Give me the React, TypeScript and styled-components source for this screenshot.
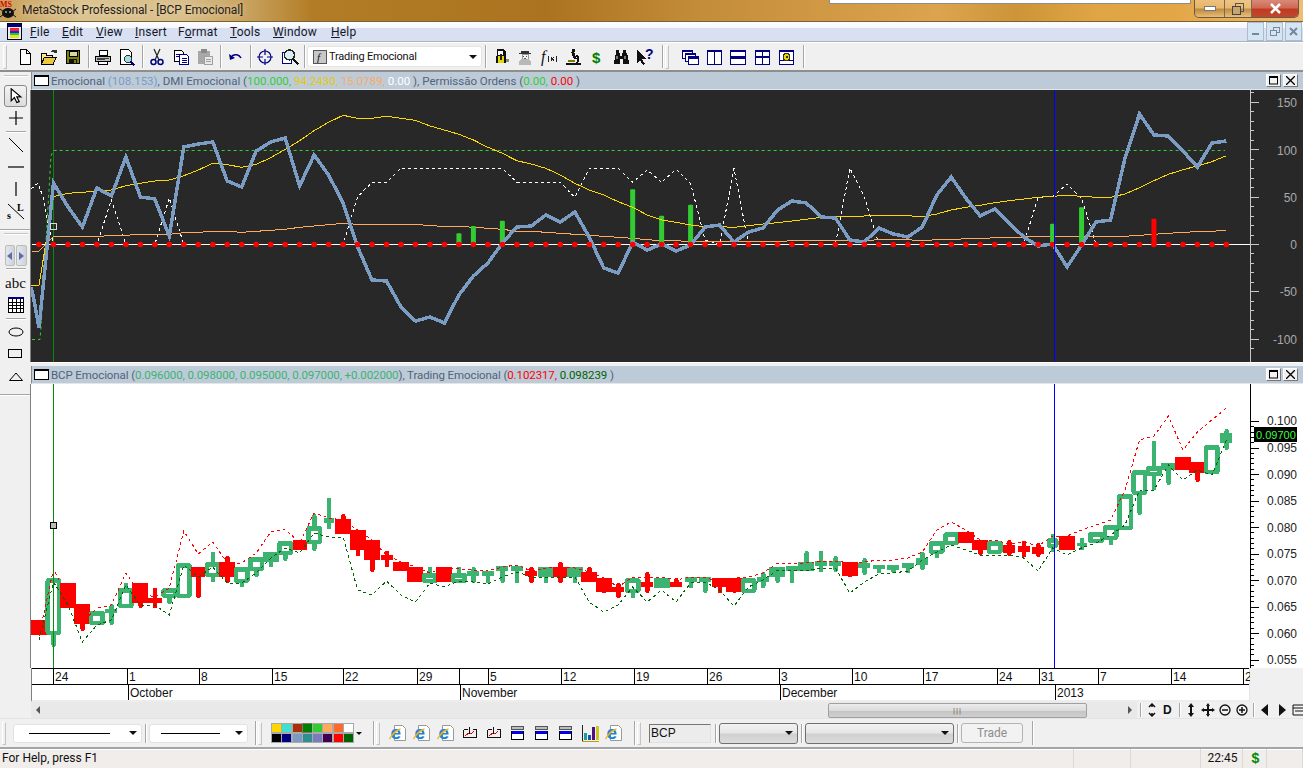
import React from 'react';
import styled, {createGlobalStyle} from 'styled-components';

const GlobalStyle = createGlobalStyle`
  html, body {
    margin: 0;
    padding: 0;
    background: #f0f0f0;
    overflow: hidden;
  }
`

const UI_FONT = `Roboto, "Noto Sans", sans-serif`
const ARIAL = `"Liberation Sans", Arial, sans-serif`

const Window = styled.div`
  width: 1303px;
  height: 768px;
  display: flex;
  flex-direction: column;
  overflow: hidden;
  position: relative;
  font-family: ${UI_FONT};
  font-size: 12px;
  color: #111;
  background: #f0f0f0;
`

/* ---------- title bar ---------- */

const TitleBar = styled.div`
  height: 22px;
  flex: none;
  box-sizing: border-box;
  display: flex;
  align-items: flex-start;
  border-bottom: 1px solid #7a6236;
  background: linear-gradient(90deg, #c79f58 0, #dcc490 6%, #d9bf8a 14%, #c8a25d 19%, #b27c26 24%, #ab731f 42%, #c48d3a 54%,
    #d49c47 66%, #dca44e 72%, #cd9538 78%, #dfa444 84%, #e2a646 90%, #ecbd75 100%);
`
const TitleLogo = styled.svg`
  width: 17px;
  height: 20px;
  flex: none;
`
const TitleText = styled.div`
  margin-left: 5px;
  font-size: 12px;
  letter-spacing: -0.1px;
  line-height: 21px;
  color: #2a2118;
  white-space: nowrap;
  text-shadow: 0 0 6px rgba(255, 255, 255, 0.55);
`
const PeekingMenu = styled.div`
  position: absolute;
  left: 829px;
  top: 0;
  width: 360px;
  height: 3px;
  background: #fff;
  border: 1px solid #8c8c8c;
  border-top: none;
`
const CaptionButtons = styled.div`
  margin-left: auto;
  margin-right: 4px;
  display: flex;
  height: 17px;
  border: 1px solid #6d5a3c;
  border-top: none;
  border-radius: 0 0 5px 5px;
  overflow: hidden;
`
const CaptionButton = styled.div<{ $w: number; $close?: boolean }>`
  width: ${p => p.$w}px;
  display: flex;
  align-items: center;
  justify-content: center;
  border-right: 1px solid #80694a;
  background: ${p => p.$close
    ? 'linear-gradient(#d98a78 0, #cf6a58 45%, #c23a1e 55%, #bc4a30 100%)'
    : 'linear-gradient(rgba(255,255,255,0.25) 0, rgba(255,255,255,0.12) 45%, rgba(110,80,40,0.35) 55%, rgba(240,210,160,0.4) 100%)'};
  &:last-child { border-right: none; }
`

/* ---------- menu bar ---------- */

const MenuBar = styled.div`
  height: 20px;
  flex: none;
  box-sizing: border-box;
  display: flex;
  align-items: center;
  padding-left: 7px;
  background: linear-gradient(#fdfdff 0, #f6f8fd 30%, #d9e0f1 34%, #d9e0f1 100%);
  border-bottom: 1px solid #a8b3c4;
`
const DocIcon = styled.svg`
  width: 15px;
  height: 17px;
  margin-right: 8px;
  flex: none;
`
const MenuItem = styled.span<{ $w: number }>`
  width: ${p => p.$w}px;
  font-size: 12px;
  letter-spacing: 0.2px;
  color: #14182a;
  u { text-underline-offset: 1px; }
`
const MdiButtons = styled.div`
  margin-left: auto;
  display: flex;
  gap: 2px;
  margin-right: 1px;
  height: 19px;
`
const MdiButton = styled.div`
  width: 17px;
  box-sizing: border-box;
  display: flex;
  align-items: center;
  justify-content: center;
  background: #d6e5f4;
  border: 1px solid #aabccd;
`

/* ---------- toolbars ---------- */

const TopToolbar = styled.div`
  height: 30px;
  flex: none;
  box-sizing: border-box;
  display: flex;
  align-items: center;
  padding-left: 3px;
  border-top: 1px solid #fff;
  border-bottom: 2px solid #8e8e8e;
  background: #f0f0f0;
`
const Grip = styled.div<{ $mr?: number; $h?: number }>`
  width: 2px;
  height: ${p => p.$h ?? 22}px;
  flex: none;
  margin-right: ${p => p.$mr ?? 0}px;
  border: 1px solid #c4c4c4;
  border-left-color: #fff;
  border-top-color: #fff;
`
const Sep = styled.div<{ $ml?: number; $mr?: number; $h?: number }>`
  width: 1px;
  height: ${p => p.$h ?? 23}px;
  flex: none;
  margin-left: ${p => p.$ml ?? 3}px;
  margin-right: ${p => p.$mr ?? 2}px;
  background: #a6a6a6;
  box-shadow: 1px 0 0 #fff;
`
const ToolSlot = styled.div`
  width: 24px;
  height: 22px;
  flex: none;
  display: flex;
  align-items: center;
  justify-content: center;
`
const Combo = styled.div`
  width: 175px;
  height: 21px;
  flex: none;
  box-sizing: border-box;
  display: flex;
  align-items: center;
  padding: 0 4px 0 5px;
  background: #fff;
  border-radius: 3px;
  border: 1px solid #e4e4e4;
`
const ComboText = styled.span`
  margin-left: 2px;
  font-size: 11px;
  letter-spacing: -0.2px;
  color: #111;
  white-space: nowrap;
`
const ArrowDown = styled.span<{ $small?: boolean }>`
  margin-left: ${p => p.$small ? '3px' : 'auto'};
  width: 0;
  height: 0;
  flex: none;
  border-left: ${p => p.$small ? 3 : 4}px solid transparent;
  border-right: ${p => p.$small ? 3 : 4}px solid transparent;
  border-top: ${p => p.$small ? 3 : 4}px solid #111;
`

/* ---------- workspace ---------- */

const Workspace = styled.div`
  height: 646px;
  flex: none;
  display: flex;
`
const LeftToolbar = styled.div`
  width: 31px;
  flex: none;
  display: flex;
  flex-direction: column;
  align-items: center;
  background: #f0f0f0;
`
const LeftGrip = styled.div<{ $mt: number; $mb: number }>`
  width: 24px;
  height: 1px;
  flex: none;
  margin-top: ${p => p.$mt}px;
  margin-bottom: ${p => p.$mb}px;
  background: #c4c4c4;
  border-bottom: 1px solid #fff;
`
const LeftRule = styled.div<{ $mt: number; $mb: number; $full?: boolean }>`
  width: ${p => p.$full ? 31 : 20}px;
  height: 1px;
  flex: none;
  margin-top: ${p => p.$mt}px;
  margin-bottom: ${p => p.$mb}px;
  background: #a6a6a6;
  box-shadow: 0 1px 0 #fff;
`
const LeftSlot = styled.div<{ $active?: boolean }>`
  width: 23px;
  height: 22px;
  flex: none;
  display: flex;
  align-items: center;
  justify-content: center;
  box-sizing: border-box;
  ${p => p.$active ? `
    border: 1px solid #8a8a8a;
    border-radius: 3px;
    background: linear-gradient(#f4f4f4, #dcdcdc);
  ` : ''}
`
const SpinBox = styled.div`
  width: 22px;
  height: 21px;
  flex: none;
  display: flex;
  gap: 1px;
`
const SpinHalf = styled.div`
  flex: 1;
  display: flex;
  align-items: center;
  justify-content: center;
  background: linear-gradient(90deg, #e4e6ea, #cfd3da);
  border: 1px solid #bcbcbc;
  box-sizing: border-box;
  border-radius: 2px;
`
const AbcLabel = styled.span`
  font-family: "Liberation Serif", serif;
  font-size: 15px;
  color: #111;
`
const Panes = styled.div`
  flex: 1;
  min-width: 0;
  display: flex;
  flex-direction: column;
`
const PaneHeader = styled.div`
  height: 18px;
  flex: none;
  box-sizing: border-box;
  display: flex;
  align-items: center;
  padding: 0 5px 0 2px;
  background: #bdcbd8;
  border-bottom: 1px solid #e6e6e6;
  border-left: 1px solid #8a8a8a;
`
const PaneIcon = styled.div`
  width: 15px;
  height: 11px;
  flex: none;
  box-sizing: border-box;
  margin-right: 2px;
  background: #fff;
  border: 1px solid #000;
  border-top-width: 2px;
`
const Legend = styled.div<{ $ls?: number }>`
  font-size: 11.5px;
  letter-spacing: ${p => p.$ls ?? 0}px;
  color: #52627a;
  white-space: nowrap;
`
const V = styled.span<{ $c: string }>`
  color: ${p => p.$c};
`
const PaneButtons = styled.div`
  margin-left: auto;
  display: flex;
  gap: 2px;
`
const PaneButton = styled.div`
  width: 15px;
  height: 13px;
  box-sizing: border-box;
  display: flex;
  align-items: center;
  justify-content: center;
  background: #f2f2f2;
  border: 1px solid #fff;
  border-right-color: #777;
  border-bottom-color: #777;
`
const ChartDark = styled.svg`
  width: 1272px;
  height: 272px;
  flex: none;
  display: block;
  background: #282828;
  border-left: 1px solid #7f7f7f;
  margin-left: -1px;
  font-family: ${ARIAL};
`
const PaneGap = styled.div`
  height: 4px;
  flex: none;
  box-sizing: border-box;
  background: #f0f0f0;
  border-top: 1px solid #fff;
`
const ChartLight = styled.svg`
  width: 1272px;
  height: 284px;
  flex: none;
  display: block;
  background: #fff;
  border-left: 1px solid #7f7f7f;
  margin-left: -1px;
  font-family: ${ARIAL};
`
const DateAxis = styled.div`
  width: 1219px;
  height: 34px;
  flex: none;
  box-sizing: border-box;
  background: #fff;
  border-left: 1px solid #7f7f7f;
  border-right: 1px solid #e4e4e4;
  border-bottom: 2px solid #ededed;
  font-family: ${ARIAL};
  font-size: 12px;
  color: #111;
`
const DateRow = styled.div`
  display: flex;
  height: 16px;
  box-sizing: border-box;
  border-top: 1px solid #000;
`
const DateCell = styled.div<{ $w: number; $first?: boolean }>`
  width: ${p => p.$w}px;
  flex: none;
  box-sizing: border-box;
  padding-left: 1px;
  line-height: 16px;
  white-space: nowrap;
  overflow: hidden;
  border-left: ${p => p.$first ? 'none' : '1px solid #000'};
`
const ScrollRow = styled.div`
  height: 16px;
  flex: none;
  display: flex;
  align-items: center;
  background: #f0f0f0;
`
const ScrollTrack = styled.div`
  width: 1106px;
  height: 16px;
  flex: none;
  display: flex;
  align-items: center;
  background: #e9e9e9;
`
const ScrollThumb = styled.div`
  width: 259px;
  height: 15px;
  margin-left: 788px;
  flex: none;
  box-sizing: border-box;
  display: flex;
  align-items: center;
  justify-content: center;
  border: 1px solid #a0a0a0;
  border-radius: 2px;
  background: linear-gradient(#ececec, #dcdcdc 50%, #c4c4c4 52%, #cfcfcf);
  font-size: 8px;
  letter-spacing: 1px;
  color: #555;
`
const ScrollArrow = styled.span<{ $dir: 'left' | 'right'; $ml: number }>`
  width: 0;
  height: 0;
  flex: none;
  margin-left: ${p => p.$ml}px;
  border-top: 4px solid transparent;
  border-bottom: 4px solid transparent;
  ${p => p.$dir === 'left' ? 'border-right: 4px solid #555;' : 'border-left: 4px solid #555;'}
`
const MiniSlot = styled.div<{ $w?: number }>`
  width: ${p => p.$w ?? 17}px;
  height: 16px;
  flex: none;
  display: flex;
  align-items: center;
  justify-content: flex-start;
  padding-left: 1px;
  box-sizing: border-box;
`
const MiniLetter = styled.span`
  font-family: ${ARIAL};
  font-weight: bold;
  font-size: 12px;
  margin-left: 3px;
  color: #111;
`

/* ---------- bottom ---------- */

const BottomToolbar = styled.div`
  height: 29px;
  flex: none;
  box-sizing: border-box;
  display: flex;
  align-items: center;
  padding-left: 2px;
  background: #f0f0f0;
  border-top: 1px solid #e4e4e4;
`
const LineSelect = styled.div<{ $w: number; $ml: number; $pl: number; $line: number }>`
  width: ${p => p.$w}px;
  height: 19px;
  margin-left: ${p => p.$ml}px;
  flex: none;
  box-sizing: border-box;
  display: flex;
  align-items: center;
  padding: 0 4px 0 ${p => p.$pl}px;
  background: #fff;
  border: 1px solid #e2e2e2;
  border-radius: 3px;
  &::before {
    content: '';
    width: ${p => p.$line}px;
    height: 1px;
    background: #000;
  }
`
const Palette = styled.div`
  display: grid;
  grid-template-columns: repeat(8, 9px);
  grid-auto-rows: 8px;
  column-gap: 1.3px;
  row-gap: 2px;
  margin-left: 10px;
  flex: none;
`
const Swatch = styled.div<{ $c: string; $on?: boolean }>`
  background: ${p => p.$c};
  outline: 1px solid ${p => p.$on ? '#777' : '#a9a9a9'};
`
const GreyInput = styled.div`
  width: 62px;
  height: 19px;
  margin-left: 8px;
  flex: none;
  box-sizing: border-box;
  padding-left: 1px;
  line-height: 17px;
  font-family: ${ARIAL};
  font-size: 12px;
  color: #111;
  background: #ececec;
  border: 1px solid #e0e0e0;
  border-top-color: #777;
  border-left-color: #777;
`
const GreySelect = styled.div<{ $w: number }>`
  width: ${p => p.$w}px;
  height: 21px;
  flex: none;
  box-sizing: border-box;
  display: flex;
  align-items: center;
  padding-right: 4px;
  border: 1px solid #707070;
  border-radius: 3px;
  background: linear-gradient(#f2f2f2, #e6e6e6 48%, #d0d0d0 52%, #dcdcdc);
`
const TradeButton = styled.div`
  width: 62px;
  height: 20px;
  flex: none;
  box-sizing: border-box;
  text-align: center;
  line-height: 18px;
  font-size: 12px;
  color: #8d8d8d;
  border: 1px solid #b4b4b4;
  border-radius: 3px;
  background: #f2f2f2;
`
const StatusBar = styled.div`
  height: 21px;
  flex: none;
  box-sizing: border-box;
  display: flex;
  align-items: center;
  background: #f0edeb;
  border-top: 2px solid #a5a5a5;
  box-shadow: inset 0 1px 0 #fff;
`
const StatusCell = styled.div<{ $w: number; $center?: boolean }>`
  width: ${p => p.$w}px;
  height: 100%;
  flex: none;
  box-sizing: border-box;
  line-height: 18px;
  padding-left: 2px;
  font-size: 12px;
  color: #111;
  text-align: ${p => p.$center ? 'center' : 'left'};
  border-right: 1px solid #dcd9d7;
  white-space: nowrap;
`
const Dollar = styled.span`
  color: #008a00;
  font-weight: bold;
  font-family: ${ARIAL};
  font-size: 14px;
`

/* ---------- icons ---------- */

const Ico = styled.svg.attrs({viewBox: '0 0 20 20'})`
  width: 20px;
  height: 20px;
  display: block;
  shape-rendering: crispEdges;
`
const SoftIco = styled(Ico)`
  shape-rendering: auto;
`
const NAVY = '#000080'

const IconNew = () => <Ico><path d="M5.5 2.5h6l3.5 3.5v11.5h-9.500z M11.500 2.500v3.500h3.500" fill="#fff" stroke="#000"/></Ico>
const IconOpen = () => (
  <Ico>
    <path d="M2.500 6.500h5v1.500h6v2h-8l-3 7z" fill="#ffe680" stroke="#000"/>
    <path d="M2.500 17.500l3-7.500h12l-3.500 7.500z" fill="#e8c840" stroke="#000"/>
    <path d="M12 5c1-2 3-3 5-2l1-1v4h-4l1-1c-1-.5-2 0-3 0z" fill="#333"/>
  </Ico>
)
const IconSave = () => (
  <Ico>
    <rect x="3.500" y="3.500" width="13" height="13" fill="#808000" stroke="#000"/>
    <rect x="6" y="4" width="8" height="5" fill="#d8d8a0" stroke="#000"/>
    <rect x="6" y="12" width="8" height="4.500" fill="#111"/>
    <rect x="11" y="13" width="2" height="3" fill="#808000"/>
  </Ico>
)
const IconPrint = () => (
  <Ico>
    <path d="M6.500 3.500h8v5h-8z" fill="#fff" stroke="#000"/>
    <path d="M2.500 9.500h15v5h-15z" fill="#c0c0c0" stroke="#000"/>
    <path d="M5.500 14.500h9v3h-9z" fill="#fff" stroke="#000"/>
    <path d="M4 11.500h12M4 12.500h8" stroke="#444"/>
    <rect x="14" y="10" width="2" height="1" fill="#e0c000"/>
  </Ico>
)
const IconPreview = () => (
  <Ico>
    <path d="M3.500 2.500h8l3 3v12h-11z" fill="#fff" stroke="#000"/>
    <circle cx="11" cy="12" r="3.500" fill="#9fdede" stroke="#333"/>
    <path d="M13.500 14.500l4 4" stroke={NAVY} strokeWidth="2"/>
  </Ico>
)
const IconCut = () => (
  <SoftIco>
    <path d="M7 2l5 11M13 2l-5 11" stroke="#222" fill="none" strokeWidth="1.200"/>
    <circle cx="6.500" cy="15" r="2.500" fill="none" stroke={NAVY} strokeWidth="1.500"/>
    <circle cx="13.500" cy="15" r="2.500" fill="none" stroke={NAVY} strokeWidth="1.500"/>
  </SoftIco>
)
const IconCopy = () => (
  <Ico>
    <path d="M3.500 3.500h7l2 2v9h-9z" fill="#fff" stroke="#000"/>
    <path d="M8.500 7.500h7l2 2v8h-9z" fill="#fff" stroke={NAVY}/>
    <path d="M5 7h3M5 9h3M10.500 11h5M10.500 13h5M10.500 15h5" stroke={NAVY}/>
  </Ico>
)
const IconPaste = () => (
  <Ico>
    <rect x="3" y="4" width="12" height="13" rx="1" fill="#a8a8a8"/>
    <rect x="6" y="2" width="6" height="4" rx="1" fill="#8a8a8a"/>
    <path d="M9.500 9.500h8v8h-8z" fill="#eaeaea" stroke="#a0a0a0"/>
    <path d="M11 12h5M11 14h5" stroke="#a0a0a0"/>
  </Ico>
)
const IconUndo = () => (
  <SoftIco>
    <path d="M7 9c3-2 7-2 9 2" fill="none" stroke={NAVY} strokeWidth="1.600"/>
    <path d="M4 7l1 6 5-2z" fill={NAVY}/>
  </SoftIco>
)
const IconTarget = () => (
  <SoftIco>
    <circle cx="10" cy="10" r="6" fill="none" stroke={NAVY} strokeWidth="1.200"/>
    <path d="M10 2v6M10 12v6M2 10h6M12 10h6" stroke={NAVY} strokeWidth="1.200"/>
  </SoftIco>
)
const IconZoomDoc = () => (
  <Ico>
    <path d="M3.500 5.500h5l4 3v8h-9z" fill="#fff" stroke={NAVY}/>
    <circle cx="10.500" cy="8" r="5" fill="#d8eeee" stroke="#222" strokeWidth="1.400"/>
    <path d="M14 11.500l5 6" stroke="#111" strokeWidth="2.200"/>
  </Ico>
)
const IconLockPerson = () => (
  <Ico>
    <path d="M6 2h7l2 3v11H5z" fill="#111"/>
    <path d="M7 4h5v4H7z" fill="#fff"/>
    <path d="M7 9h6v7H7z" fill="#e6d800"/>
    <path d="M9 7h2v6H9z" fill="#222"/>
    <path d="M15 12h3v3h-3z" fill="#888"/>
  </Ico>
)
const IconSpy = () => (
  <Ico>
    <path d="M6 4h8v2h2v1H4V6h2z" fill="#333"/>
    <path d="M7 7h6v5H7z" fill="#f4f4f4" stroke="#999"/>
    <path d="M4 18v-4l3-2h6l3 2v4z" fill="#b8b8b8"/>
    <path d="M8 9h1M11 9h1M9 11h2" stroke="#555"/>
  </Ico>
)
const FxText = styled.text`
  font-family: "Liberation Serif", serif;
  font-style: italic;
  fill: #111;
`
const IconFx = () => (
  <Ico>
    <FxText x="2" y="15" fontSize="16">f</FxText>
    <path d="M10 9c-1 2-1 4 0 6M17 9c1 2 1 4 0 6M12 10l3 4M15 10l-3 4" stroke="#222" fill="none"/>
  </Ico>
)
const IconScope = () => (
  <Ico>
    <path d="M3 16h15v2H3z" fill="#111"/>
    <path d="M9 2h3v3h-1l3 7h-3l-3-7H9z" fill="#111"/>
    <path d="M14 7c3 2 3 6 1 9h-2c2-2 2-5 0-7z" fill="#111"/>
    <path d="M5 13h7v2H5z" fill="#7a7a00"/>
  </Ico>
)
const DollarSvg = styled.text`
  font-family: ${ARIAL};
  font-weight: bold;
  fill: #008000;
`
const IconDollar = () => <Ico><DollarSvg x="5" y="16" fontSize="15">$</DollarSvg></Ico>
const IconBinoculars = () => (
  <Ico>
    <path d="M5 3h3v3h1v3h2V6h1V3h3v3h1l2 9v2h-6v-5H9v5H3v-2l2-9z" fill="#111"/>
    <path d="M5 9h2v3H5zM13 9h2v3h-2z" fill="#777"/>
  </Ico>
)
const HelpMark = styled.text`
  font-family: ${ARIAL};
  font-weight: bold;
  fill: #000080;
`
const IconArrowHelp = () => (
  <Ico>
    <path d="M2 2v14l3-3 3 5 2-1-3-5h4z" fill="#111"/>
    <HelpMark x="10" y="12" fontSize="14">?</HelpMark>
  </Ico>
)
const WinFrame = styled.rect.attrs({fill: '#fff', stroke: NAVY})``
const IconCascade = () => (
  <Ico>
    <WinFrame x="2.500" y="3.500" width="10" height="8"/>
    <rect x="2" y="3" width="11" height="2" fill={NAVY}/>
    <WinFrame x="5.500" y="6.500" width="10" height="8"/>
    <rect x="5" y="6" width="11" height="2" fill={NAVY}/>
    <WinFrame x="8.500" y="9.500" width="10" height="8"/>
    <rect x="8" y="9" width="11" height="3" fill={NAVY}/>
  </Ico>
)
const IconTileV = () => (
  <Ico>
    <WinFrame x="3" y="3.500" width="14.500" height="13.500"/>
    <rect x="3" y="3" width="15" height="2" fill={NAVY}/>
    <rect x="10" y="3" width="1" height="14" fill={NAVY}/>
  </Ico>
)
const IconTileH = () => (
  <Ico>
    <WinFrame x="2.500" y="3.500" width="15" height="13.500"/>
    <rect x="2" y="3" width="16" height="2" fill={NAVY}/>
    <rect x="2" y="9" width="16" height="3" fill={NAVY}/>
  </Ico>
)
const IconTileAll = () => (
  <Ico>
    <WinFrame x="3" y="3.500" width="14.500" height="13.500"/>
    <rect x="3" y="3" width="15" height="2" fill={NAVY}/>
    <rect x="3" y="9" width="15" height="2" fill={NAVY}/>
    <rect x="10" y="3" width="1" height="14" fill={NAVY}/>
  </Ico>
)
const IconArrange = () => (
  <Ico>
    <WinFrame x="3" y="3.500" width="14.500" height="13.500"/>
    <rect x="3" y="3" width="15" height="2" fill={NAVY}/>
    <rect x="3" y="13" width="15" height="1" fill={NAVY}/>
    <circle cx="10.500" cy="10" r="3.500" fill="#e8d800" stroke="#333"/>
    <rect x="9.500" y="9" width="2" height="2" fill="#333"/>
  </Ico>
)
const FBox = styled.svg.attrs({viewBox: '0 0 14 14'})`
  width: 14px;
  height: 14px;
  flex: none;
`
const IconEl = styled.text`
  font-family: ${ARIAL};
  font-weight: bold;
  fill: #1a84d8;
`
const IconIE = () => (
  <SoftIco>
    <path d="M6.500 2.500h8l3 3v12h-11z" fill="#fff" stroke="#999"/>
    <IconEl x="2.500" y="16" fontSize="19">e</IconEl>
    <path d="M1.500 16c3-5 7-9 11-10" fill="none" stroke="#f0b020" strokeWidth="1.300"/>
  </SoftIco>
)
const IconMiniChart = () => (
  <Ico>
    <path d="M3.500 6.500h4M12.500 6.500h4M3.500 6.500v8h13v-8" fill="none" stroke="#111"/>
    <path d="M5 13l4-3 2 1 3-3" stroke="#e00000" fill="none"/>
    <path d="M9.500 4v7M9 5h1" stroke="#111"/>
  </Ico>
)
const IconPaneMove = () => (
  <Ico>
    <rect x="3.500" y="3.500" width="12" height="3" fill="#bdbdbd" stroke="#555"/>
    <rect x="3.500" y="8.500" width="12" height="8" fill="#fff" stroke="#000"/>
    <rect x="4" y="8" width="11" height="3" fill="#0000e0"/>
  </Ico>
)
const IconBars = () => (
  <Ico>
    <path d="M2 2v16h16" fill="none" stroke="#222"/>
    <rect x="4" y="10" width="3" height="7" fill="#18a0a0"/>
    <rect x="8" y="12" width="3" height="5" fill="#2050c0"/>
    <rect x="12" y="4" width="3" height="13" fill="#501080"/>
    <rect x="16" y="3" width="3" height="14" fill="#c8c820"/>
    <path d="M2 18h17" stroke="#c0a000"/>
  </Ico>
)
const Tool = styled.svg.attrs({viewBox: '0 0 20 20'})`
  width: 20px;
  height: 20px;
  display: block;
`
const PointerIco = styled(Tool)`
  width: 16px;
  height: 16px;
`
const Mini = styled.svg.attrs({viewBox: '0 0 14 14'})`
  width: 14px;
  height: 14px;
  display: block;
  flex: none;
`

/* ---------- chart data: x comes from the bar index ---------- */

const barX = (i: number) => 39 + 14.48 * i
const poly = (ys: number[]) => ys.map((y, i) => `${barX(i).toFixed(1)},${y.toFixed(1)}`).join(' ')
// same as poly but leaves out bar 0, whose start is drawn by hand
const polyFromOne = (ys: number[]) => poly(ys).split(' ').slice(1).join(' ')
const zy = (zs: number[]) => zs.map(z => 90 + z / 3)

const emocional = [328, 183, 207, 227, 188, 196, 157, 197, 199, 236, 147, 144, 142, 181, 187, 151, 142, 138, 186, 155, 175, 203, 247, 280, 281, 307, 321, 317, 323,
  295, 276, 263, 243, 227, 226, 215, 222, 212, 237, 268, 273, 242, 250, 244, 251, 245, 227, 225, 242, 232, 228, 210, 201, 203, 217, 218, 240,
  242, 228, 234, 237, 227, 195, 177, 198, 216, 209, 223, 237, 246, 244, 267, 245, 222, 220, 158, 114, 135, 136, 151, 167, 143, 141]

const dmiYellow = zy([0, 320, 310, 307, 303, 300, 287, 280, 273, 270, 257, 240, 220, 224, 232, 223, 203, 178, 152, 122, 97, 76, 85, 85, 79, 85, 91, 108, 120,
  133, 150, 172, 190, 212, 222, 235, 255, 280, 300, 315, 335, 352, 375, 390, 397, 405, 410, 410, 412, 407, 402, 398, 393, 388, 382, 380, 380,
  378, 377, 377, 377, 380, 372, 360, 352, 346, 338, 332, 327, 322, 319, 316, 319, 322, 322, 312, 293, 272, 253, 239, 228, 215, 197])

const dmiOrange = zy([0, 440, 440, 440, 440, 436, 436, 433, 433, 433, 428, 427, 424, 424, 427, 424, 421, 418, 412, 408, 404, 400, 403, 403, 403, 403, 403, 407, 409,
  409, 412, 415, 418, 424, 424, 427, 430, 433, 436, 439, 442, 445, 449, 452, 452, 455, 455, 455, 455, 455, 455, 455, 452, 452, 452, 452, 452,
  452, 449, 449, 449, 452, 449, 449, 446, 446, 443, 443, 441, 439, 439, 439, 439, 439, 439, 439, 436, 433, 430, 427, 425, 424, 421])

const Z = 463
const dmiWhite = zy([280, Z, Z, Z, Z, 330, Z, Z, Z, 325, Z, Z, Z, Z, Z, Z, Z, Z, Z, Z, Z, Z, 320, 277, 277, 235, 235, 235, 235,
  235, 235, 235, 235, 277, 277, 277, 277, 322, 235, 235, 235, 277, 240, 277, 238, 280, 450, Z, 235, Z, Z, Z, Z, Z, Z, Z, 235,
  320, Z, Z, Z, Z, Z, Z, Z, Z, Z, Z, Z, 322, 320, 282, 325, Z])

const histogram: { i: number; top: number; c: string }[] = [
  {i: 29, top: 430, c: '#32cd32'}, {i: 30, top: 408, c: '#32cd32'}, {i: 32, top: 392, c: '#32cd32'},
  {i: 41, top: 298, c: '#32cd32'}, {i: 43, top: 377, c: '#32cd32'}, {i: 45, top: 344, c: '#32cd32'},
  {i: 70, top: 401, c: '#32cd32'}, {i: 72, top: 352, c: '#32cd32'}, {i: 77, top: 386, c: '#ff0000'},
]

// r red body, h hollow green body, s solid green body: kind, top, bottom, high, low, half width
type Candle = [string, number, number, number?, number?, number?]
const candles: Candle[] = [
  ['r', 620, 635], ['h', 578, 635, 578, 647], ['r', 583, 608], ['r', 604, 624, 604, 631], ['h', 611, 625], ['s', 609, 613, 604, 625, 6],
  ['h', 588, 608, 583], ['r', 583, 603, 583, 608], ['r', 598, 603, 588, 608, 7], ['h', 588, 598, 588, 604], ['h', 563, 598],
  ['r', 567, 577, 567, 598, 7], ['h', 562, 577, 552, 582], ['r', 562, 577, 556, 583], ['h', 567, 583, 567, 587], ['h', 557, 571, 557, 577],
  ['s', 552, 562, 552, 567], ['h', 541, 555, 541, 561], ['r', 540, 550, 540, 550, 7], ['h', 526, 544, 514, 551], ['s', 518, 523, 498, 529, 5],
  ['r', 519, 534, 514, 534], ['r', 530, 550, 530, 556], ['r', 540, 560, 540, 572], ['r', 555, 560, 551, 567, 6], ['r', 562, 571], ['r', 567, 582],
  ['h', 573, 583, 567], ['r', 567, 582], ['h', 573, 583, 567], ['s', 571, 576, 567, 583, 6], ['s', 571, 576, 571, 583, 6], ['s', 566, 571, 566, 583, 6],
  ['s', 566, 571, 566, 583, 6], ['r', 571, 576, 567, 583, 6], ['s', 567, 577, 567, 583], ['r', 567, 577, 562, 583, 7], ['s', 567, 577, 567, 583],
  ['r', 572, 582, 567, 582], ['r', 578, 592, 578, 593], ['r', 587, 592, 583, 598, 6], ['h', 578, 593, 578, 598], ['r', 582, 587, 572, 593, 6],
  ['s', 578, 588], ['r', 582, 587, 578, 587, 6], ['s', 577, 582, 577, 588, 6], ['s', 577, 582, 577, 593, 6], ['r', 578, 587, 578, 593], ['r', 578, 592, 578, 593],
  ['h', 578, 593], ['s', 577, 582, 572, 588, 6], ['s', 567, 577, 567, 583], ['s', 566, 571, 566, 583, 6], ['s', 562, 571, 551, 571], ['s', 561, 566, 551, 572, 6],
  ['s', 561, 566, 556, 572, 6], ['r', 562, 576, 562, 577],
  ['s', 563, 568, 558, 575, 6], ['s', 565, 569, 565, 573, 6], ['s', 565, 570, 565, 573, 6], ['s', 563, 568, 563, 573, 6], ['s', 558, 565, 552, 570, 6],
  ['h', 541, 554, 541, 558], ['h', 532, 545], ['r', 532, 543], ['r', 540, 550, 540, 555], ['h', 541, 554], ['r', 545, 553, 540, 556, 6], ['r', 546, 552, 541, 557, 6],
  ['r', 547, 554, 543, 557, 6], ['h', 538, 548, 534, 552, 6], ['r', 536, 550], ['s', 543, 546, 538, 550, 5], ['h', 532, 543], ['h', 525, 540, 525, 545],
  ['h', 494, 530], ['h', 470, 495, 470, 515], ['h', 466, 476, 441, 490], ['s', 463, 470, 463, 485, 7], ['r', 457, 470], ['r', 462, 473, 462, 482], ['h', 445, 474], ['s', 433, 443, 429, 450, 6],
]

const bandUp = [
  636, 569, 597, 622, 608, 605, 573, 593, 597, 588, 531, 554, 542, 563, 563, 553, 532, 529, 543, 513, 518, 520, 530, 540, 555, 562, 567, 573, 567,
  569, 570, 571, 567, 565, 571, 568, 567, 568, 572, 578, 587, 577, 577, 577, 580, 577, 577, 583, 578, 577, 573, 563, 563, 563, 561, 561, 563,
  562, 560, 560, 558, 552, 530, 522, 530, 540, 540, 544, 542, 546, 536, 536, 530, 525, 520, 490, 440, 436, 416, 450, 432, 420, 408,
]
const bandDown = [
  640, 582, 605, 642, 625, 620, 585, 605, 605, 615, 565, 577, 567, 583, 583, 573, 558, 548, 553, 533, 537, 537, 590, 595, 581, 595, 602, 583, 587,
  581, 582, 584, 577, 572, 577, 577, 577, 577, 602, 612, 605, 587, 602, 590, 602, 583, 582, 590, 606, 587, 580, 570, 570, 571, 568, 568, 593,
  582, 574, 573, 571, 560, 552, 545, 550, 555, 555, 555, 558, 571, 548, 555, 548, 543, 535, 525, 490, 490, 465, 480, 470, 475, 440,
]

const darkLabels: [string, number][] = [['150', 103], ['100', 150.500], ['50', 198], ['0', 245], ['-50', 292], ['-100', 340]]
const lightLabels: [string, number][] = [['0.100', 421], ['0.095', 448], ['0.090', 475], ['0.085', 501], ['0.080', 528], ['0.075', 554], ['0.070', 581], ['0.065', 607], ['0.060', 634], ['0.055', 660]]

const dateTicks = [53, 127, 199, 272, 343, 417, 459, 488, 561, 634, 707, 779, 852, 923, 997, 1039, 1098, 1171, 1243, 1250]
const dateLabels = ['24', '1', '8', '15', '22', '29', '', '5', '12', '19', '26', '3', '10', '17', '24', '31', '7', '14', '2']

const monthCells: [string, number][] = [['', 96], ['October', 332], ['November', 320], ['December', 275], ['2013', 195]]

const palette = ['#ffd700', '#40e0d0', '#a5300a', '#008000', '#32cd32', '#ffa95e', '#ff6a2a', '#ffffff',
  '#000000', '#000080', '#7b9cc0', '#2f8f8f', '#7b7bbf', '#3f004f', '#ff0000', '#006400']

const menus: [React.ReactNode, number][] = [
  [<><u>F</u>ile</>, 32], [<><u>E</u>dit</>, 34], [<><u>V</u>iew</>, 39], [<><u>I</u>nsert</>, 43], [<>F<u>o</u>rmat</>, 52],
  [<><u>T</u>ools</>, 43], [<><u>W</u>indow</>, 58], [<><u>H</u>elp</>, 40],
]

/* ---------- charts ---------- */

const DarkChart: React.FC = () => {
  const ticks = []
  for (let v = -110; v <= 160; v += 10) {
    const y = Math.round(244 - 0.9475 * v) + 0.5
    ticks.push(<line key={v} x1={1250} x2={v % 50 === 0 ? 1259 : 1254} y1={y} y2={y} stroke="#c8c8c8"/>)
  }
  return (
    <ChartDark viewBox="31 90 1272 272">
      <line x1={53.500} x2={53.500} y1={90} y2={362} stroke="#0a8a0a"/>
      <polyline points={`31,189 38,183 43,197 48,223 ${polyFromOne(dmiWhite)}`} fill="none" stroke="#fff" strokeDasharray="3 3" shapeRendering="crispEdges"/>
      <polyline points="32,339.500 40,339.500 41,327 51,156 53.500,150.500 1225,150.500" fill="none" stroke="#32cd32" strokeDasharray="3 3"/>
      <polyline points={`32,251 39,251 ${polyFromOne(dmiOrange)}`} fill="none" stroke="#ffa95e" shapeRendering="crispEdges"/>
      <line x1={32} x2={1250} y1={244.500} y2={244.500} stroke="#fff"/>
      {histogram.map(b => (
        <rect key={b.i} x={barX(b.i) - 2.500} y={90 + b.top / 3} width={5} height={244 - (90 + b.top / 3)} rx={1} fill={b.c}/>
      ))}
      <polyline points={`31,285 39,285 ${polyFromOne(dmiYellow)}`} fill="none" stroke="#ffd700" shapeRendering="crispEdges"/>
      <polyline points={`31,287 34,300 ${poly(emocional)}`} fill="none" stroke="#7b9dc4" strokeWidth={3.500} strokeLinejoin="miter" shapeRendering="crispEdges"/>
      {emocional.map((_, i) => <circle key={i} cx={barX(i)} cy={244.500} r={2.800} fill="#ff0000"/>)}
      <line x1={1054.500} x2={1054.500} y1={90} y2={362} stroke="#0000ff"/>
      <rect x={50.500} y={223.500} width={6} height={6} fill="none" stroke="#ddd"/>
      <line x1={1250.500} x2={1250.500} y1={90} y2={362} stroke="#c8c8c8"/>
      {ticks}
      {darkLabels.map(([t, y]) => <text key={t} x={1297} y={y + 4} textAnchor="end" fontSize={12} fill="#a8a8a8">{t}</text>)}
    </ChartDark>
  )
}

const CandleMark: React.FC<{ c: Candle; i: number }> = ({c, i}) => {
  const [kind, top, bot, high, low, hw] = c
  const x = barX(i)
  const w = hw ?? 8
  const color = kind === 'r' ? '#ff0000' : '#3cb371'
  const hi = high ?? top
  const lo = low ?? bot
  return (
    <g shapeRendering="crispEdges">
      <rect x={x - 2} y={hi} width={4.500} height={lo - hi} rx={2} fill={color}/>
      {kind === 'h' ? (
        <rect x={x - w + 2.250} y={top + 2.250} width={w * 2 - 4.500} height={Math.max(bot - top - 4.500, 0.500)} rx={1}
              fill="#fff" stroke={color} strokeWidth={4.500}/>
      ) : (
        <rect x={x - w} y={top} width={w * 2} height={bot - top} fill={color}/>
      )}
    </g>
  )
}

const LightChart: React.FC = () => {
  const ticks = []
  for (let k = 0; k <= 50; k++) {
    const y = Math.round(421 + k * 5.300) + 0.5
    ticks.push(<line key={k} x1={1250} x2={k % 5 === 0 ? 1259 : 1254} y1={y} y2={y} stroke="#000"/>)
  }
  return (
    <ChartLight viewBox="31 384 1272 284">
      {candles.map((c, i) => <CandleMark key={i} c={c} i={i}/>)}
      <polyline points={poly(bandUp)} fill="none" stroke="#ff0000" strokeDasharray="3 3" shapeRendering="crispEdges"/>
      <polyline points={poly(bandDown)} fill="none" stroke="#006400" strokeDasharray="3 3" shapeRendering="crispEdges"/>
      <line x1={53.500} x2={53.500} y1={384} y2={668} stroke="#0a8a0a"/>
      <line x1={1054.500} x2={1054.500} y1={384} y2={668} stroke="#0000ff"/>
      <rect x={50.500} y={522.500} width={6} height={6} fill="#bbb" stroke="#000"/>
      <line x1={1250.500} x2={1250.500} y1={384} y2={668} stroke="#000"/>
      {ticks}
      {lightLabels.map(([t, y]) => <text key={t} x={1297} y={y + 4} textAnchor="end" fontSize={12} fill="#222">{t}</text>)}
      <rect x={1254} y={427} width={43} height={15} fill="#000"/>
      <text x={1256} y={439} fontSize={11} fill="#3cff3c">0.09700</text>
    </ChartLight>
  )
}

/* ---------- app ---------- */

const PaneControls: React.FC = () => (
  <PaneButtons>
    <PaneButton><svg width="9" height="9"><rect x=".5" y="1" width="8" height="7" fill="none" stroke="#000"/><rect x="0" y="0" width="9" height="2"/></svg></PaneButton>
    <PaneButton><svg width="9" height="9"><path d="M0 0l9 9M9 0l-9 9" stroke="#000" strokeWidth="1.300"/></svg></PaneButton>
  </PaneButtons>
)

const App: React.FC = () => (
  <Window>
    <GlobalStyle/>
    <TitleBar>
      <TitleLogo viewBox="0 0 17 20">
        <ellipse cx="8" cy="13" rx="6" ry="5" fill="#111"/>
        <path d="M0 9l4 3M0 17l4-3M16 9l-4 3M16 17l-4-3" stroke="#111"/>
        <circle cx="6" cy="12" r="1" fill="#9ab"/>
        <circle cx="10" cy="12" r="1" fill="#9ab"/>
        <text x="0" y="7" fontSize="8" fontWeight="bold" fontFamily={`"Liberation Serif", serif`} fill="#e00000">MS</text>
      </TitleLogo>
      <TitleText>MetaStock Professional - [BCP Emocional]</TitleText>
      <CaptionButtons>
        <CaptionButton $w={29}>
          <svg width="12" height="5"><rect x=".5" y=".5" width="11" height="4" fill="#fff" stroke="#777"/></svg>
        </CaptionButton>
        <CaptionButton $w={26}>
          <svg width="12" height="12"><rect x="3.500" y=".5" width="8" height="8" fill="none" stroke="#555"/><rect x=".5" y="3.500" width="8" height="8" fill="#c9a46c" stroke="#444"/></svg>
        </CaptionButton>
        <CaptionButton $w={46} $close>
          <svg width="13" height="11"><path d="M2 1l9 9M11 1l-9 9" stroke="#fff" strokeWidth="2.500"/></svg>
        </CaptionButton>
      </CaptionButtons>
    </TitleBar>
    <PeekingMenu/>

    <MenuBar>
      <DocIcon viewBox="0 0 15 17">
        <rect x=".5" y=".5" width="14" height="16" fill="#e8e8f8" stroke="#000"/>
        <rect x="1" y="1" width="13" height="3" fill={NAVY}/>
        <rect x="3" y="5" width="9" height="3" fill="#ff2020"/>
        <rect x="3" y="8" width="9" height="2" fill="#2020ff"/>
        <rect x="3" y="10" width="9" height="2" fill="#20d020"/>
        <rect x="3" y="12" width="9" height="3" fill="#e8e020"/>
      </DocIcon>
      {menus.map(([label, w], i) => <MenuItem key={i} $w={w}>{label}</MenuItem>)}
      <MdiButtons>
        <MdiButton><svg width="9" height="9"><rect x="1" y="6" width="7" height="2" fill="#7488a0"/></svg></MdiButton>
        <MdiButton><svg width="10" height="9"><rect x="3.500" y=".5" width="6" height="5" fill="none" stroke="#7488a0"/><rect x=".5" y="3.500" width="6" height="5" fill="#d6e5f4" stroke="#7488a0"/></svg></MdiButton>
        <MdiButton><svg width="9" height="9"><path d="M1 1l7 7M8 1l-7 7" stroke="#7488a0" strokeWidth="2"/></svg></MdiButton>
      </MdiButtons>
    </MenuBar>

    <TopToolbar>
      <Grip $mr={6}/>
      <ToolSlot><IconNew/></ToolSlot>
      <ToolSlot><IconOpen/></ToolSlot>
      <ToolSlot><IconSave/></ToolSlot>
      <Sep/>
      <ToolSlot><IconPrint/></ToolSlot>
      <ToolSlot><IconPreview/></ToolSlot>
      <Sep/>
      <ToolSlot><IconCut/></ToolSlot>
      <ToolSlot><IconCopy/></ToolSlot>
      <ToolSlot><IconPaste/></ToolSlot>
      <Sep/>
      <ToolSlot><IconUndo/></ToolSlot>
      <Sep/>
      <ToolSlot><IconTarget/></ToolSlot>
      <ToolSlot><IconZoomDoc/></ToolSlot>
      <Sep/>
      <Combo>
        <FBox>
          <rect x=".5" y=".5" width="13" height="13" fill="#c8c8c8" stroke="#555"/>
          <FxText x="4" y="11" fontSize="11">f</FxText>
        </FBox>
        <ComboText>Trading Emocional</ComboText>
        <ArrowDown/>
      </Combo>
      <Sep $ml={3} $mr={3}/>
      <ToolSlot><IconLockPerson/></ToolSlot>
      <ToolSlot><IconSpy/></ToolSlot>
      <ToolSlot><IconFx/></ToolSlot>
      <ToolSlot><IconScope/></ToolSlot>
      <ToolSlot><IconDollar/></ToolSlot>
      <ToolSlot><IconBinoculars/></ToolSlot>
      <ToolSlot><IconArrowHelp/></ToolSlot>
      <Sep $ml={5} $mr={2}/>
      <Grip $mr={9}/>
      <ToolSlot><IconCascade/></ToolSlot>
      <ToolSlot><IconTileV/></ToolSlot>
      <ToolSlot><IconTileH/></ToolSlot>
      <ToolSlot><IconTileAll/></ToolSlot>
      <ToolSlot><IconArrange/></ToolSlot>
      <Sep $ml={5}/>
    </TopToolbar>

    <Workspace>
      <LeftToolbar>
        <LeftGrip $mt={3} $mb={8}/>
        <LeftSlot $active>
          <PointerIco><path d="M4 1v15l4-4 3 6 3-1-3-6h5z" fill="#fff" stroke="#000" strokeWidth="1.500"/></PointerIco>
        </LeftSlot>
        <LeftSlot><Tool><path d="M10 3v14M3 10h14" stroke="#000" strokeWidth="1.200"/></Tool></LeftSlot>
        <LeftRule $mt={2} $mb={2}/>
        <LeftSlot><Tool><path d="M3 3l14 14" stroke="#000"/></Tool></LeftSlot>
        <LeftSlot><Tool><path d="M2 10h16" stroke="#000" strokeWidth="1.200"/></Tool></LeftSlot>
        <LeftSlot><Tool><path d="M10 3v14" stroke="#000" strokeWidth="1.200"/></Tool></LeftSlot>
        <LeftSlot>
          <Tool>
            <path d="M2 3l16 15" stroke="#000"/>
            <text x="1" y="18" fontSize="10" fontWeight="bold" fontFamily={`"Liberation Serif", serif`}>s</text>
            <text x="11" y="10" fontSize="10" fontWeight="bold" fontFamily={`"Liberation Serif", serif`}>L</text>
          </Tool>
        </LeftSlot>
        <LeftRule $full $mt={7} $mb={3}/>
        <LeftGrip $mt={0} $mb={10}/>
        <SpinBox>
          <SpinHalf><svg width="5" height="8"><path d="M5 0v8L0 4z" fill="#5a6fa8"/></svg></SpinHalf>
          <SpinHalf><svg width="5" height="8"><path d="M0 0v8l5-4z" fill="#5a6fa8"/></svg></SpinHalf>
        </SpinBox>
        <LeftRule $mt={2} $mb={3}/>
        <LeftSlot><AbcLabel>abc</AbcLabel></LeftSlot>
        <LeftSlot>
          <svg width="16" height="16" viewBox="0 0 16 16" shapeRendering="crispEdges">
            <rect x=".5" y=".5" width="15" height="15" fill="#fff" stroke="#000"/>
            <rect x="0" y="0" width="16" height="2" fill={NAVY}/>
            <path d="M4 2v14M8 2v14M12 2v14M0 5.500h16M0 8.500h16M0 11.500h16" stroke="#000"/>
          </svg>
        </LeftSlot>
        <LeftRule $mt={2} $mb={2}/>
        <LeftSlot><svg width="16" height="10"><ellipse cx="8" cy="5" rx="7" ry="4" fill="none" stroke="#000"/></svg></LeftSlot>
        <LeftSlot><svg width="15" height="10"><rect x=".5" y=".5" width="13" height="8" fill="none" stroke="#000"/></svg></LeftSlot>
        <LeftSlot><svg width="14" height="9"><path d="M.5 8.500L7 1l6.500 7.500z" fill="none" stroke="#000"/></svg></LeftSlot>
        <LeftRule $full $mt={7} $mb={0}/>
      </LeftToolbar>

      <Panes>
        <PaneHeader>
          <PaneIcon/>
          <Legend>
            Emocional <V $c="#7b9cc4">(108.153)</V>, DMI Emocional (<V $c="#32cd32">100.000,</V> <V $c="#e8c800">94.2430,</V> <V $c="#ffa95e">15.0789,</V> <V $c="#fff">0.00</V> ), Permissão Ordens (<V $c="#32cd32">0.00,</V> <V $c="#ff0000">0.00</V> )
          </Legend>
          <PaneControls/>
        </PaneHeader>
        <DarkChart/>
        <PaneGap/>
        <PaneHeader>
          <PaneIcon/>
          <Legend $ls={-0.1}>
            BCP Emocional (<V $c="#3cb371">0.096000, 0.098000, 0.095000, 0.097000, +0.002000</V>), Trading Emocional (<V $c="#ff0000">0.102317,</V> <V $c="#006400">0.098239</V> )
          </Legend>
          <PaneControls/>
        </PaneHeader>
        <LightChart/>
        <DateAxis>
          <DateRow>
            <DateCell $w={21} $first/>
            {dateLabels.map((t, i) => (
              <DateCell key={i} $w={dateTicks[i + 1] - dateTicks[i]}>{t}</DateCell>
            ))}
          </DateRow>
          <DateRow>
            {monthCells.map(([t, w], i) => <DateCell key={i} $w={w} $first={i === 0}>{t}</DateCell>)}
          </DateRow>
        </DateAxis>
        <ScrollRow>
          <ScrollTrack>
            <ScrollArrow $dir="left" $ml={5}/>
            <ScrollThumb>|||</ScrollThumb>
            <ScrollArrow $dir="right" $ml={41}/>
          </ScrollTrack>
          <Sep $ml={3} $mr={3} $h={14}/>
          <MiniSlot $w={15}><Mini><path d="M7 1v3M7 10v3M4 4l3-3 3 3M4 10l3 3 3-3" stroke="#111" strokeWidth="1.500" fill="none"/></Mini></MiniSlot>
          <MiniSlot $w={17}><MiniLetter>D</MiniLetter></MiniSlot>
          <Sep $ml={3} $mr={3} $h={14}/>
          <MiniSlot><Mini><path d="M7 0l3 4H8v6h2l-3 4-3-4h2V4H4z" fill="#111"/></Mini></MiniSlot>
          <MiniSlot><Mini><path d="M7 0l2 3H8v3h3V5l3 2-3 2V8H8v3h1l-2 3-2-3h1V8H3v1L0 7l3-2v1h3V3H5z" fill="#111"/></Mini></MiniSlot>
          <MiniSlot><Mini><circle cx="7" cy="7" r="5" fill="none" stroke="#111" strokeWidth="1.300"/><path d="M4 7h6" stroke="#111" strokeWidth="1.500"/></Mini></MiniSlot>
          <MiniSlot><Mini><circle cx="7" cy="7" r="5" fill="none" stroke="#111" strokeWidth="1.300"/><path d="M4 7h6M7 4v6" stroke="#111" strokeWidth="1.500"/></Mini></MiniSlot>
          <Sep $ml={2} $mr={3} $h={14}/>
          <MiniSlot><Mini><path d="M10 1v12L3 7z" fill="#111"/></Mini></MiniSlot>
          <MiniSlot><Mini><path d="M4 1v12l7-6z" fill="#111"/></Mini></MiniSlot>
          <MiniSlot $w={10}><Mini><path d="M1 2h12v10H1zM1 5h12M3 8h8" fill="none" stroke="#111"/></Mini></MiniSlot>
        </ScrollRow>
      </Panes>
    </Workspace>

    <BottomToolbar>
      <Grip $h={21}/>
      <LineSelect $w={129} $ml={7} $pl={15} $line={81}><ArrowDown/></LineSelect>
      <Sep $ml={3} $mr={3} $h={19}/>
      <LineSelect $w={99} $ml={0} $pl={11} $line={59}><ArrowDown/></LineSelect>
      <Sep $ml={7} $mr={2} $h={24}/>
      <Grip $h={21}/>
      <Palette>
        {palette.map((c, i) => <Swatch key={i} $c={c} $on={i === 3}/>)}
      </Palette>
      <ArrowDown $small/>
      <Sep $ml={11} $mr={2} $h={24}/>
      <Grip $h={21} $mr={6}/>
      <ToolSlot><IconIE/></ToolSlot>
      <ToolSlot><IconIE/></ToolSlot>
      <ToolSlot><IconIE/></ToolSlot>
      <ToolSlot><IconMiniChart/></ToolSlot>
      <ToolSlot><IconMiniChart/></ToolSlot>
      <ToolSlot><IconPaneMove/></ToolSlot>
      <ToolSlot><IconPaneMove/></ToolSlot>
      <ToolSlot><IconPaneMove/></ToolSlot>
      <ToolSlot><IconBars/></ToolSlot>
      <ToolSlot><IconIE/></ToolSlot>
      <Sep $ml={8} $mr={2} $h={24}/>
      <Grip $h={21}/>
      <GreyInput>BCP</GreyInput>
      <Sep $ml={4} $mr={3} $h={19}/>
      <GreySelect $w={79}><ArrowDown/></GreySelect>
      <Sep $ml={3} $mr={3} $h={19}/>
      <GreySelect $w={149}><ArrowDown/></GreySelect>
      <Sep $ml={3} $mr={3} $h={19}/>
      <TradeButton>Trade</TradeButton>
      <Sep $ml={9} $h={24}/>
    </BottomToolbar>

    <StatusBar>
      <StatusCell $w={1074}>For Help, press F1</StatusCell>
      <StatusCell $w={57}/>
      <StatusCell $w={70}/>
      <StatusCell $w={42} $center>22:45</StatusCell>
      <StatusCell $w={24} $center><Dollar>$</Dollar></StatusCell>
      <StatusCell $w={36}/>
    </StatusBar>
  </Window>
)

export default App
